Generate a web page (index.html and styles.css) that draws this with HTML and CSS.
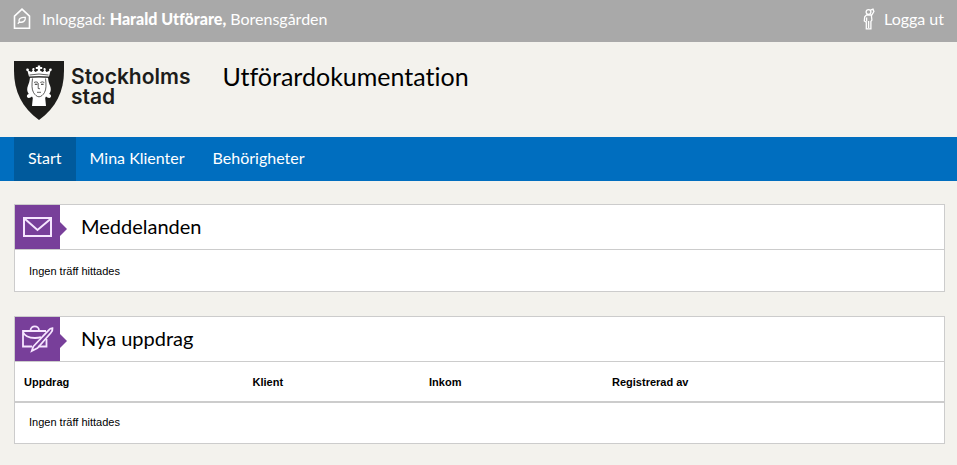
FILE: index.html
```html
<!DOCTYPE html>
<html lang="sv">
  <head>
    <meta charset="utf-8">
    <title>Utförardokumentation</title>
    <link rel="stylesheet" href="styles.css">
  </head>
  <body>
    <div class="topbar">
      <div class="user">
        <svg width="18" height="22" viewBox="0 0 18 22" fill="none" stroke="#fff" stroke-width="1.6">
          <path d="M1.500 20.200V8.200L9 1.200l7.500 7v12z" />
          <path stroke-width="1.300" d="M4.800 15.700l1.500-1.700c-1.300-3.600 2-5 6-4.600.4 3.500-2.200 5.600-6 4.600" />
        </svg>
        <span>Inloggad: <strong>Harald Utförare,</strong> Borensgården</span>
      </div>
      <a class="logout" href="#">
        <svg width="12" height="22" viewBox="0 0 12 22" fill="none" stroke="#fff" stroke-width="1.3">
          <circle cx="5.500" cy="4" r="2.400" />
          <path d="M7.500 2.200l2.500-1 .9 2.300-2.600 4.500M3.500 7h4.800l.6 5-1 1.500v7.300H3.300v-6.500L1.300 13l.4-4.200zM5.600 13v7M3.600 9.500v4" />
        </svg>
        Logga ut
      </a>
    </div>

    <header class="header">
      <a class="logo" href="#">
        <svg width="50" height="59" viewBox="0 0 50 59">
          <path fill="#1d1d1b" d="M0 0h50v10c0 20-8 37-25 49C8 47 0 30 0 10z" />
          <!-- hair and neck -->
          <path fill="#fff" d="M16 16.500c-.5 4-.8 5-2 8-1.200 3-1.200 6 .8 8.500-2.300.2-2.600 3.800 0 4 1.400 0 2.200-.8 3.200-1.500l.8 1.500-.8 8h14l-.8-8 .8-1.500c1 .7 1.800 1.500 3.200 1.500 2.600-.2 2.300-3.800 0-4 2-2.500 2-5.500.8-8.500-1.200-3-1.500-4-2-8z" />
          <!-- crown -->
          <path fill="#fff" d="M15 15.500L13.500 10c-1.800-.3-1.600-2.600 0-2.600 1.700 0 1.800 1.600 1 2.300l3 1.300 1.300-1.700c-1.500-1 0-3 1.200-2.200 1.100.8.4 2-.2 2.300l1.500 1.500 2.500-1.200V8h-2V6h2V4.500h2.400V6h2v2h-2v1.700l2.500 1.200L30.200 9.400c-.6-.3-1.300-1.500-.2-2.300 1.200-.8 2.700 1.200 1.200 2.200l1.300 1.700 3-1.300c-.8-.7-.7-2.300 1-2.300 1.600 0 1.800 2.300 0 2.600L35 15.500z" />
          <path stroke="#1d1d1b" stroke-width=".7" fill="none" d="M15.500 14q9.500-2 19 0M15.500 16.500q9.500-2 19 0" />
          <!-- face -->
          <path stroke="#1d1d1b" stroke-width=".7" fill="none" d="M18.500 17.500c-.8 6-.8 11 1 14 1.500 2.500 3.500 4.300 5.500 4.300s4-1.800 5.500-4.300c1.800-3 1.800-8 1-14M20 21.500q2-1.300 4 0M26.300 21.500q2-1.300 4 0M24.200 22v5.500l1.800.3M23 31.300h4" />
          <path fill="#1d1d1b" d="M20.800 22.800h2.600v1h-2.600zM27 22.800h2.600v1H27z" />
        </svg>
        <span class="logo-text">Stockholms<br>stad</span>
      </a>
      <h1>Utförardokumentation</h1>
    </header>

    <nav class="nav">
      <a class="active" href="#">Start</a>
      <a href="#">Mina Klienter</a>
      <a href="#">Behörigheter</a>
    </nav>

    <main class="content">
      <section class="panel">
        <div class="panel-head">
          <div class="panel-icon">
            <svg width="30" height="22" viewBox="0 0 30 22" fill="none" stroke="#f6e6ff" stroke-width="2">
              <path d="M1 2h27v18H1zM2 3l12.500 11L27.500 3" />
            </svg>
          </div>
          <h2>Meddelanden</h2>
        </div>
        <p class="empty">Ingen träff hittades</p>
      </section>

      <section class="panel">
        <div class="panel-head">
          <div class="panel-icon">
            <svg width="34" height="30" viewBox="0 0 34 30" fill="none" stroke="#f6e6ff" stroke-width="1.800">
              <path d="M9.500 6.500C9.500 1 18 1 18 6.500M25 7H2v15.500h9M25.500 15v7.500h-8M2 8c2 5 7 6 12 6 2 0 4-.2 6-.8" />
              <path d="M12.300 22.500L27 6.800c1.500-1.800 3.200-2.600 4.500-2.600.3 1.500-.3 3-1.800 4.800L16.500 24l-5.700 3z" />
            </svg>
          </div>
          <h2>Nya uppdrag</h2>
        </div>
        <table class="tasks">
          <thead>
            <tr>
              <th class="col-task">Uppdrag</th>
              <th class="col-client">Klient</th>
              <th class="col-date">Inkom</th>
              <th>Registrerad av</th>
            </tr>
          </thead>
          <tbody>
            <tr>
              <td class="empty" colspan="4">Ingen träff hittades</td>
            </tr>
          </tbody>
        </table>
      </section>
    </main>
  </body>
</html>
```

FILE: styles.css
```css
* {
  box-sizing: border-box;
}

body {
  margin: 0;
  background-color: #f3f2ed;
  color: #000;
  font-family: Lato, "Open Sans", sans-serif;
  font-size: 16px;
  font-variant-ligatures: none;
}

a {
  color: inherit;
  text-decoration: none;
}

h1,
h2 {
  margin: 0;
  font-weight: normal;
}

svg {
  display: block;
}

.topbar {
  display: flex;
  justify-content: space-between;
  height: 42px;
  padding: 0 13px;
  background-color: #a9a9a9;
  color: #fff;
  line-height: 20px;
}

.user,
.logout {
  display: flex;
  align-items: center;
  padding-bottom: 4px;
}

.user {
  gap: 11px;
}

.user strong {
  font-weight: 900;
}

.logout {
  gap: 9px;
}

.header {
  display: flex;
  gap: 32px;
  height: 95px;
  padding: 18px 14px;
}

.logo {
  display: flex;
  gap: 7px;
  padding-top: 1px;
  color: #1d1d1b;
}

.logo-text {
  padding-top: 6px;
  font-family: Inter, Lato, sans-serif;
  font-size: 21px;
  font-weight: 600;
  line-height: 20px;
}

h1 {
  font-size: 25px;
  line-height: 32px;
}

.nav {
  display: flex;
  padding: 0 14px;
  background-color: #006ebf;
  color: #fff;
}

.nav a {
  padding: 0 14px 2px;
  line-height: 42px;
}

.nav .active {
  background-color: #005a9c;
}

.content {
  padding: 23px 12px 0 14px;
}

.panel {
  margin-bottom: 24px;
  border: 1px solid #ccc;
  background-color: #fff;
}

.panel:last-child {
  margin-bottom: 20px;
}

.panel-head {
  display: flex;
  align-items: center;
  gap: 21px;
  height: 45px;
  border-bottom: 1px solid #ccc;
}

.panel-icon {
  position: relative;
  display: flex;
  align-items: center;
  justify-content: center;
  width: 45px;
  height: 44px;
  background-color: #783f9a;
}

/* arrow pointing at the heading */
.panel-icon::after {
  content: "";
  position: absolute;
  left: 100%;
  top: 17px;
  border: 7px solid transparent;
  border-left-color: #783f9a;
  border-right: 0;
}

h2 {
  padding-bottom: 2px;
  font-size: 20px;
  line-height: 24px;
}

.empty,
.tasks {
  margin: 0;
  font-family: "Liberation Sans", Arial, sans-serif;
  font-size: 11px;
  line-height: 13px;
}

.empty {
  padding: 15px 14px 13px;
}

.tasks {
  width: 100%;
  border-collapse: collapse;
  table-layout: fixed;
}

.tasks th {
  padding: 14px 9px 12px;
  border-bottom: 2px solid #ccc;
  text-align: left;
}

.tasks .empty {
  padding: 13px 14px 14px;
}

.col-task {
  width: 24.6%;
}

.col-client {
  width: 19%;
}

.col-date {
  width: 19.7%;
}
```
